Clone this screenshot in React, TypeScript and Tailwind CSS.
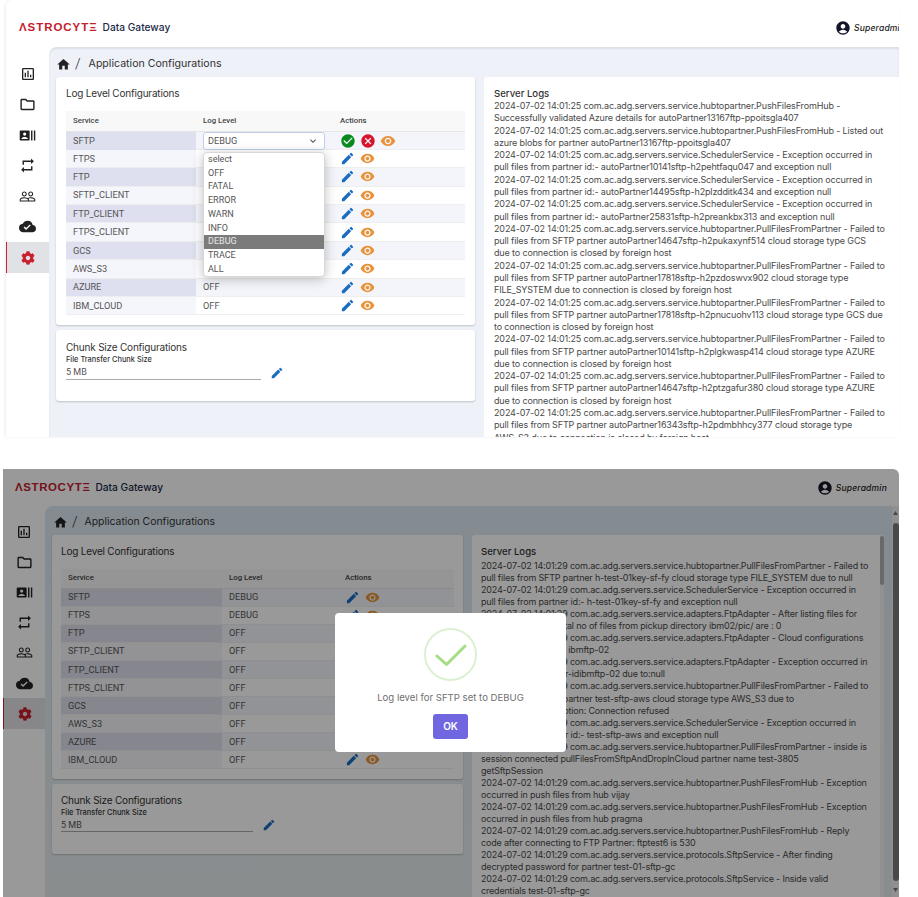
import {
  MdAccountCircle,
  MdCancel,
  MdCheckCircle,
  MdCloudDone,
  MdEdit,
  MdHome,
  MdKeyboardArrowDown,
  MdOutlineAssessment,
  MdOutlineFolder,
  MdPeopleOutline,
  MdRecentActors,
  MdRepeat,
  MdVisibility,
} from 'react-icons/md';
import { FaCog } from 'react-icons/fa';

const services = ['SFTP', 'FTPS', 'FTP', 'SFTP_CLIENT', 'FTP_CLIENT', 'FTPS_CLIENT', 'GCS', 'AWS_S3', 'AZURE', 'IBM_CLOUD'];
const levels = ['select', 'OFF', 'FATAL', 'ERROR', 'WARN', 'INFO', 'DEBUG', 'TRACE', 'ALL'];

const topLogs = [
  '2024-07-02 14:01:25 com.ac.adg.servers.service.hubtopartner.PushFilesFromHub -',
  'Successfully validated Azure details for autoPartner13167ftp-ppoitsgla407',
  '2024-07-02 14:01:25 com.ac.adg.servers.service.hubtopartner.PushFilesFromHub - Listed out',
  'azure blobs for partner autoPartner13167ftp-ppoitsgla407',
  '2024-07-02 14:01:25 com.ac.adg.servers.service.SchedulerService - Exception occurred in',
  'pull files from partner id:- autoPartner10141sftp-h2pehtfaqu047 and exception null',
  '2024-07-02 14:01:25 com.ac.adg.servers.service.SchedulerService - Exception occurred in',
  'pull files from partner id:- autoPartner14495sftp-h2plzdditk434 and exception null',
  '2024-07-02 14:01:25 com.ac.adg.servers.service.SchedulerService - Exception occurred in',
  'pull files from partner id:- autoPartner25831sftp-h2preankbx313 and exception null',
  '2024-07-02 14:01:25 com.ac.adg.servers.service.hubtopartner.PullFilesFromPartner - Failed to',
  'pull files from SFTP partner autoPartner14647sftp-h2pukaxynf514 cloud storage type GCS',
  'due to connection is closed by foreign host',
  '2024-07-02 14:01:25 com.ac.adg.servers.service.hubtopartner.PullFilesFromPartner - Failed to',
  'pull files from SFTP partner autoPartner17818sftp-h2pzdoswvx902 cloud storage type',
  'FILE_SYSTEM due to connection is closed by foreign host',
  '2024-07-02 14:01:25 com.ac.adg.servers.service.hubtopartner.PullFilesFromPartner - Failed to',
  'pull files from SFTP partner autoPartner17818sftp-h2pnucuohv113 cloud storage type GCS due',
  'to connection is closed by foreign host',
  '2024-07-02 14:01:25 com.ac.adg.servers.service.hubtopartner.PullFilesFromPartner - Failed to',
  'pull files from SFTP partner autoPartner10141sftp-h2plgkwasp414 cloud storage type AZURE',
  'due to connection is closed by foreign host',
  '2024-07-02 14:01:25 com.ac.adg.servers.service.hubtopartner.PullFilesFromPartner - Failed to',
  'pull files from SFTP partner autoPartner14647sftp-h2ptzgafur380 cloud storage type AZURE',
  'due to connection is closed by foreign host',
  '2024-07-02 14:01:25 com.ac.adg.servers.service.hubtopartner.PullFilesFromPartner - Failed to',
  'pull files from SFTP partner autoPartner16343sftp-h2pdmbhhcy377 cloud storage type',
  'AWS_S3 due to connection is closed by foreign host',
];

const bottomLogs = [
  '2024-07-02 14:01:29 com.ac.adg.servers.service.hubtopartner.PullFilesFromPartner - Failed to',
  'pull files from SFTP partner h-test-01key-sf-fy cloud storage type FILE_SYSTEM due to null',
  '2024-07-02 14:01:29 com.ac.adg.servers.service.SchedulerService - Exception occurred in',
  'pull files from partner id:- h-test-01key-sf-fy and exception null',
  '2024-07-02 14:01:29 com.ac.adg.servers.service.adapters.FtpAdapter - After listing files for',
  'partner ibmftp-02 total no of files from pickup directory ibm02/pic/ are : 0',
  '2024-07-02 14:01:29 com.ac.adg.servers.service.adapters.FtpAdapter - Cloud configurations',
  'not found for partner ibmftp-02',
  '2024-07-02 14:01:29 com.ac.adg.servers.service.adapters.FtpAdapter - Exception occurred in',
  'pull files from partner-idibmftp-02 due to:null',
  '2024-07-02 14:01:29 com.ac.adg.servers.service.hubtopartner.PullFilesFromPartner - Failed to',
  'pull files from SFTP partner test-sftp-aws cloud storage type AWS_S3 due to',
  'java.net.SocketException: Connection refused',
  '2024-07-02 14:01:29 com.ac.adg.servers.service.SchedulerService - Exception occurred in',
  'pull files from partner id:- test-sftp-aws and exception null',
  '2024-07-02 14:01:29 com.ac.adg.servers.service.hubtopartner.PullFilesFromPartner - inside is',
  'session connected pullFilesFromSftpAndDropInCloud partner name test-3805',
  'getSftpSession',
  '2024-07-02 14:01:29 com.ac.adg.servers.service.hubtopartner.PushFilesFromHub - Exception',
  'occurred in push files from hub vijay',
  '2024-07-02 14:01:29 com.ac.adg.servers.service.hubtopartner.PushFilesFromHub - Exception',
  'occurred in push files from hub pragma',
  '2024-07-02 14:01:29 com.ac.adg.servers.service.hubtopartner.PushFilesFromHub - Reply',
  'code after connecting to FTP Partner: ftptest6 is 530',
  '2024-07-02 14:01:29 com.ac.adg.servers.service.protocols.SftpService - After finding',
  'decrypted password for partner test-01-sftp-gc',
  '2024-07-02 14:01:29 com.ac.adg.servers.service.protocols.SftpService - Inside valid',
  'credentials test-01-sftp-gc',
];

function Sidebar({ compact }: { compact: boolean }) {
  const icons = [
    <MdOutlineAssessment key="a" size={16} />,
    <MdOutlineFolder key="b" size={17} />,
    <MdRecentActors key="c" size={17} />,
    <MdRepeat key="d" size={17} />,
    <MdPeopleOutline key="e" size={17} />,
    <MdCloudDone key="f" size={17} />,
  ];
  return (
    <div className={compact ? 'w-[42px] shrink-0 pt-[11px] text-[#222]' : 'w-[43px] shrink-0 pt-[12px] text-[#222]'}>
      {icons.map((icon) => (
        <div key={icon.key} className={compact ? 'flex h-[30.2px] items-center justify-center' : 'flex h-[30.5px] items-center justify-center'}>
          {icon}
        </div>
      ))}
      <div className="flex h-[31px] items-center justify-center border-l border-[#d0202e] bg-[#e1e2e6] text-[#c8202f]">
        <FaCog size={14} />
      </div>
    </div>
  );
}

function Logo({ compact }: { compact: boolean }) {
  return (
    <div className="flex items-center">
      <span className={compact ? "font-['Liberation_Sans',sans-serif] text-[11.5px] leading-none font-bold tracking-[0.6px] text-[#c4212f]" : "font-['Liberation_Sans',sans-serif] text-[11.5px] leading-none font-bold tracking-[0.95px] text-[#c4212f]"}>
        ΛSTROCYTΞ
      </span>
      <span className="ml-[5px] font-['Inter',sans-serif] text-[10.2px] font-medium text-[#222a4a]">Data Gateway</span>
    </div>
  );
}

function LogLines({ lines, compact }: { lines: string[]; compact: boolean }) {
  return (
    <div className={compact ? "mt-[2px] font-['Inter',sans-serif] text-[9px] leading-[12.05px] tracking-[-0.18px] text-[#4a4a4a]" : "font-['Inter',sans-serif] text-[9px] leading-[12.28px] tracking-[-0.14px] text-[#4a4a4a]"}>
      {lines.map((line, i) => (
        <div key={i} className="whitespace-nowrap">
          {line}
        </div>
      ))}
    </div>
  );
}

function RowActions({ editing }: { editing: boolean }) {
  if (editing) {
    return (
      <div className="flex items-center gap-[4px] pl-[7px]">
        <MdCheckCircle size={16} className="text-[#0a8a1c]" />
        <MdCancel size={16} className="text-[#d8152f]" />
        <MdVisibility size={16} className="text-[#e8933a]" />
      </div>
    );
  }
  return (
    <div className="flex items-center gap-[5px] pl-[7px]">
      <MdEdit size={15} className="text-[#1a6cc0]" />
      <MdVisibility size={15} className="text-[#e8933a]" />
    </div>
  );
}

function Dropdown() {
  return (
    <div className="absolute top-[20.5px] left-[7px] z-10 w-[122px] overflow-hidden rounded-[4px] border border-[#d8d8d8] bg-white shadow-[0_2px_12px_rgba(0,0,0,0.25)]">
      {levels.map((level) => (
        <div
          key={level}
          className={
            level === 'DEBUG'
              ? 'flex h-[13.7px] items-center bg-[#7b7b7b] pl-[4px] text-[9px] text-[#e8e8e8]'
              : 'flex h-[13.7px] items-center pl-[4px] text-[9px] text-[#555]'
          }
        >
          {level}
        </div>
      ))}
    </div>
  );
}

function LogLevelTable({ open, values }: { open: boolean; values: string[] }) {
  const cols = open ? 'grid grid-cols-[130px_137px_1fr]' : 'grid grid-cols-[161px_116px_1fr]';
  const rowH = open ? 'h-[18.4px]' : 'h-[18.1px]';
  const headH = open ? 'h-[20.5px]' : 'h-[19.5px]';
  return (
    <div className="font-['Roboto',sans-serif] text-[9.2px] text-[#555]">
      <div className={`${cols} ${headH} items-center border-b border-[#e6e6e6] bg-[#f8f8f8] text-[7.8px] font-medium text-[#444]`}>
        <div className="pl-[7px]">Service</div>
        <div className="pl-[7px]">Log Level</div>
        <div className="pl-[7px]">Actions</div>
      </div>
      {services.map((name, i) => (
        <div key={name} className={`${cols} ${rowH} items-center ${i % 2 === 0 ? 'bg-[#f4f5fb]' : 'bg-white'} border-b border-[#eeeeee]`}>
          <div className={`flex h-full items-center pl-[7px] ${i % 2 === 0 ? 'bg-[#dfe0ef]' : 'bg-[#f5f6fb]'}`}>{name}</div>
          <div className="relative flex h-full items-center pl-[7px]">
            {open && i === 0 ? (
              <>
                <div className="flex h-[18px] w-[122px] items-center justify-between rounded-[3px] border border-[#bcd0ec] bg-white pr-[5px] pl-[4px]">
                  DEBUG
                  <MdKeyboardArrowDown size={12} />
                </div>
                <Dropdown />
              </>
            ) : open && i < 8 ? null : (
              values[i]
            )}
          </div>
          <RowActions editing={open && i === 0} />
        </div>
      ))}
    </div>
  );
}

function ChunkCard({ compact }: { compact: boolean }) {
  return (
    <div className={compact ? 'mt-[5px] h-[70px] rounded-[3px] bg-white px-[9px] pt-[10px] shadow-[0_1px_2px_rgba(0,0,0,0.2)]' : 'mt-[5px] h-[71px] rounded-[3px] bg-white px-[10px] pt-[11px] shadow-[0_1px_2px_rgba(0,0,0,0.2)]'}>
      <div className="font-['Inter',sans-serif] text-[10px] leading-[12px] tracking-[-0.2px] text-[#333]">Chunk Size Configurations</div>
      <div className="mt-[2px] font-['Inter',sans-serif] text-[7.4px] leading-[10px] font-medium text-[#333]">File Transfer Chunk Size</div>
      <div className="flex items-center">
        <div className={compact ? 'h-[14px] w-[192px] border-b border-[#aaa] text-[9px] leading-[14px] text-[#555]' : 'h-[15px] w-[195px] border-b border-[#aaa] text-[9px] leading-[14px] text-[#555]'}>5 MB</div>
        <MdEdit size={14} className="ml-[9px] text-[#1a6cc0]" />
      </div>
    </div>
  );
}

function Header({ compact, clipped }: { compact: boolean; clipped: boolean }) {
  return (
    <div className={compact ? 'flex h-[37px] items-center justify-between pt-[1px] pr-[12px] pl-[12px]' : 'flex h-[47px] items-center justify-between pt-[9px] pr-0 pl-[13px]'}>
      <Logo compact={compact} />
      <div className="flex items-center gap-[3px]">
        <MdAccountCircle size={16} className="text-[#15152a]" />
        <span className={clipped ? "w-[45px] overflow-hidden font-['Inter',sans-serif] text-[8.5px] font-medium tracking-[0.2px] whitespace-nowrap text-[#222] italic" : "font-['Inter',sans-serif] text-[8.5px] font-medium tracking-[0.2px] text-[#222] italic"}>
          Superadmin
        </span>
      </div>
    </div>
  );
}

function Breadcrumb({ compact }: { compact: boolean }) {
  return (
    <div className={compact ? 'flex h-[29px] items-center pt-[3px] pl-[8px] text-[#222]' : 'flex h-[30px] items-center pt-[4px] pl-[7px] text-[#222]'}>
      <MdHome size={15} />
      <span className="ml-[4px] text-[14px] font-light">/</span>
      <span className={compact ? "ml-[7px] font-['Inter',sans-serif] text-[10.4px] text-[#333]" : "ml-[8px] font-['Inter',sans-serif] text-[10.6px] text-[#333]"}>Application Configurations</span>
    </div>
  );
}

function TopScreen() {
  const values = services.map(() => 'OFF');
  return (
    <div className="ml-[6px] h-[437px] w-[893px] overflow-hidden rounded-tl-[6px] bg-white font-['Roboto',sans-serif] shadow-[-1px_0_3px_rgba(0,0,0,0.08)]">
      <Header compact={false} clipped />
      <div className="flex h-[390px]">
        <Sidebar compact={false} />
        <div className="min-w-0 flex-1 overflow-hidden rounded-tl-[8px] bg-[#eef1f7] shadow-[inset_0_2px_2px_rgba(0,0,0,0.08)]">
          <Breadcrumb compact={false} />
          <div className="flex gap-[9px] pl-[7px]">
            <div className="w-[419px] shrink-0">
              <div className="h-[248px] rounded-[3px] bg-white px-[10px] pt-[10px] shadow-[0_1px_2px_rgba(0,0,0,0.2)]">
                <div className="mb-[12px] font-['Inter',sans-serif] text-[10px] leading-[12px] tracking-[-0.2px] text-[#333]">Log Level Configurations</div>
                <LogLevelTable open values={values} />
              </div>
              <ChunkCard compact={false} />
            </div>
            <div className="h-[400px] w-[420px] shrink-0 rounded-[3px] bg-white pt-[11px] pl-[10px]">
              <div className="font-['Inter',sans-serif] text-[9.6px] leading-[12px] font-medium text-[#333]">Server Logs</div>
              <LogLines lines={topLogs} compact={false} />
            </div>
          </div>
        </div>
      </div>
    </div>
  );
}

function SuccessDialog() {
  return (
    <div className="absolute top-[144px] left-[332px] flex h-[139px] w-[231px] flex-col items-center rounded-[4px] bg-white pt-[15px]">
      <div className="flex h-[53px] w-[53px] items-center justify-center rounded-full border-2 border-[#dcf0d2]">
        <svg width="32" height="24" viewBox="0 0 32 24" fill="none">
          <path d="M2 13 L11.5 21.5 L30 3" stroke="#a5dc86" strokeWidth="3" strokeLinecap="round" strokeLinejoin="round" />
        </svg>
      </div>
      <div className="mt-[11px] font-['Inter',sans-serif] text-[9.6px] leading-[12px] text-[#707070]">Log level for SFTP set to DEBUG</div>
      <button className="mt-[10px] h-[25px] w-[35px] rounded-[3px] bg-[#7066e0] font-['Inter',sans-serif] text-[10px] font-semibold text-white">OK</button>
    </div>
  );
}

function BottomScreen() {
  const values = services.map((_, i) => (i < 2 ? 'DEBUG' : 'OFF'));
  return (
    <div className="relative mt-[32px] ml-[3px] h-[428px] w-[896px] overflow-hidden rounded-tr-[6px] bg-white font-['Roboto',sans-serif]">
      <Header compact clipped={false} />
      <div className="flex h-[391px]">
        <Sidebar compact />
        <div className="min-w-0 flex-1 overflow-hidden rounded-tl-[8px] bg-linear-to-b from-[#dce9f3] to-[#e6ebed]">
          <div className="flex h-full">
            <div className="min-w-0 flex-1">
              <Breadcrumb compact />
              <div className="flex gap-[9px] pl-[7px]">
                <div className="w-[411px] shrink-0">
                  <div className="h-[244px] rounded-[3px] bg-white px-[9px] pt-[10px] shadow-[0_1px_2px_rgba(0,0,0,0.2)]">
                    <div className="mb-[12px] font-['Inter',sans-serif] text-[10px] leading-[12px] tracking-[-0.2px] text-[#333]">Log Level Configurations</div>
                    <LogLevelTable open={false} values={values} />
                  </div>
                  <ChunkCard compact />
                </div>
                <div className="flex h-[400px] w-[412px] shrink-0 justify-between rounded-[3px] bg-white">
                  <div className="pt-[11px] pl-[9px]">
                    <div className="font-['Inter',sans-serif] text-[9.6px] leading-[12px] font-medium text-[#333]">Server Logs</div>
                    <LogLines lines={bottomLogs} compact />
                  </div>
                  <div className="h-[400px] w-[4px] shrink-0 bg-[#f2f2f2]">
                    <div className="mt-[1px] h-[49px] rounded-full bg-[#b0b0b0]" />
                  </div>
                </div>
              </div>
            </div>
            {/* outer page scrollbar */}
            <div className="flex w-[7px] shrink-0 flex-col items-center justify-between bg-[#f1f1f1] py-[5px]">
              <svg width="5" height="4" viewBox="0 0 5 4"><path d="M2.5 0 L5 4 L0 4 Z" fill="#777" /></svg>
              <div className="h-[358px] w-[6px] rounded-full bg-[#7a7a7a]" />
              <svg width="5" height="4" viewBox="0 0 5 4"><path d="M0 0 L5 0 L2.5 4 Z" fill="#777" /></svg>
            </div>
          </div>
        </div>
      </div>
      <div className="absolute inset-0 bg-black/40" />
      <SuccessDialog />
    </div>
  );
}

export default function App() {
  return (
    <div className="h-[897px] w-[918px] overflow-hidden bg-white">
      <TopScreen />
      <BottomScreen />
    </div>
  );
}
